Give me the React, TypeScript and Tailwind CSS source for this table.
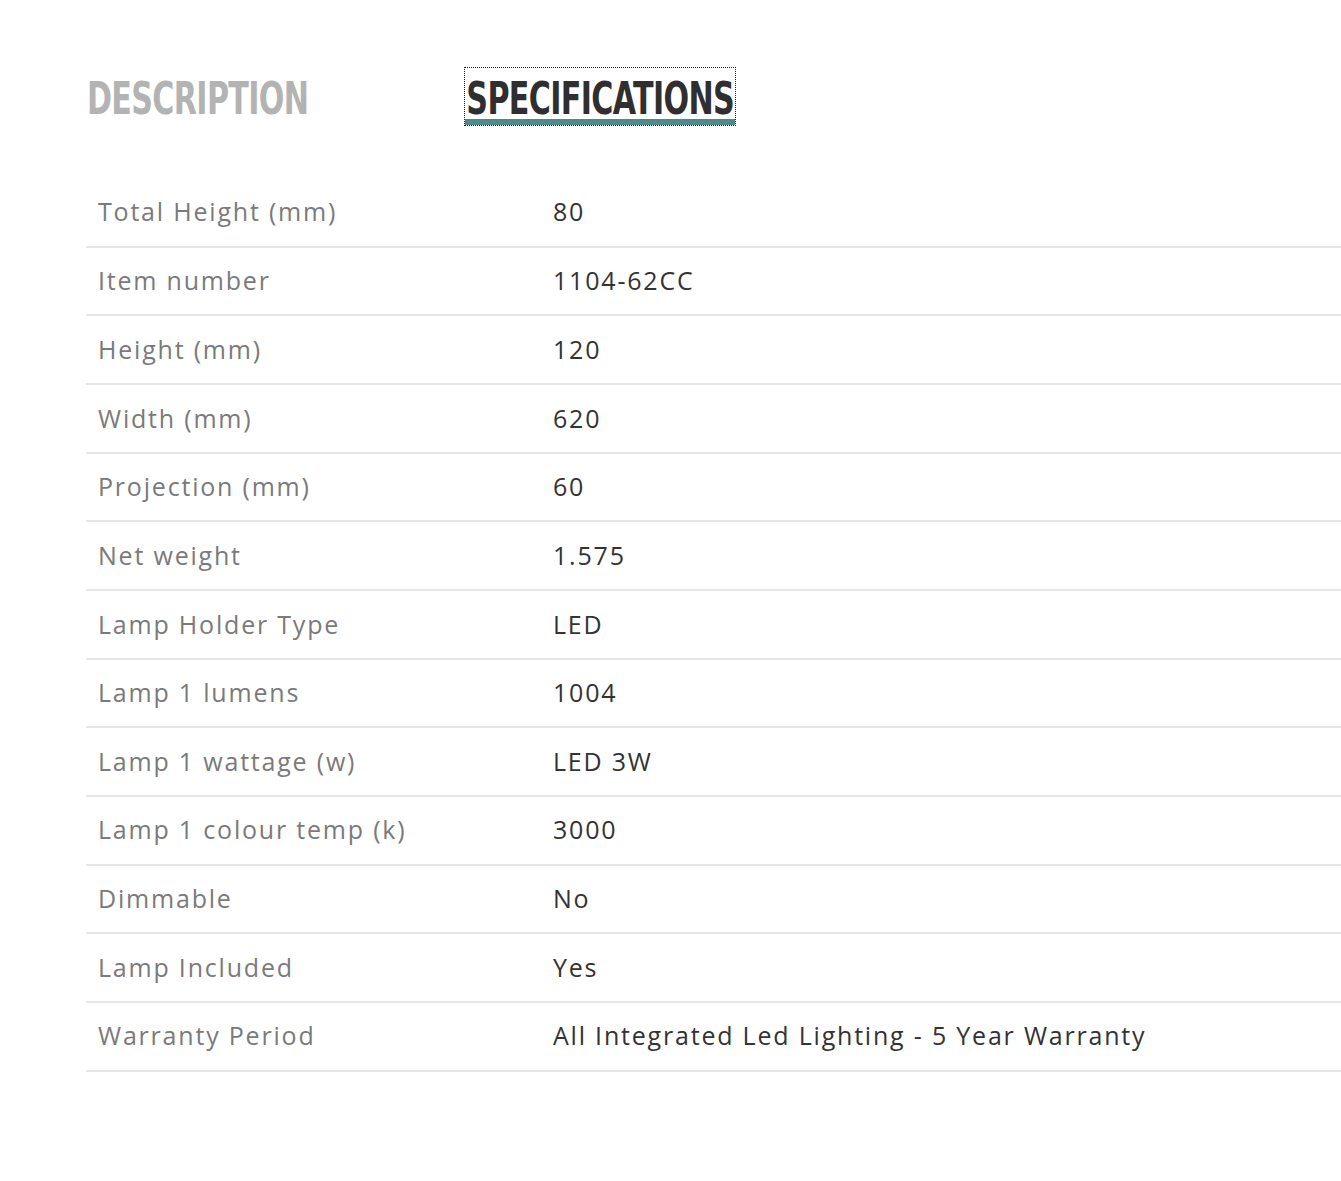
import { useState } from "react";

const specs: [string, string][] = [
  ["Total Height (mm)", "80"],
  ["Item number", "1104-62CC"],
  ["Height (mm)", "120"],
  ["Width (mm)", "620"],
  ["Projection (mm)", "60"],
  ["Net weight", "1.575"],
  ["Lamp Holder Type", "LED"],
  ["Lamp 1 lumens", "1004"],
  ["Lamp 1 wattage (w)", "LED 3W"],
  ["Lamp 1 colour temp (k)", "3000"],
  ["Dimmable", "No"],
  ["Lamp Included", "Yes"],
  ["Warranty Period", "All Integrated Led Lighting - 5 Year Warranty"],
];

// no condensed face installed, so the heading font is squeezed horizontally
const headingText =
  "block h-[51px] shrink-0 origin-left scale-x-[0.67] overflow-visible whitespace-nowrap pt-[11px] font-['DejaVu_Sans',sans-serif] text-[45px] leading-[40px] font-bold uppercase tracking-[-1px]";

export default function App() {
  const [tab, setTab] = useState<"description" | "specifications">("specifications");

  return (
    <div className="min-h-[1181px] bg-white pl-[86px] pt-[67px] font-['Open_Sans',sans-serif]">
      <div className="flex items-start">
        <button
          type="button"
          onClick={() => setTab("description")}
          className={`flex h-[59px] w-[378px] flex-col items-stretch justify-start border border-transparent text-left ${
            tab === "description" ? "text-[#2f2f2f]" : "text-[#b3b3b3]"
          }`}
        >
          <span className={headingText}>Description</span>
        </button>
        <button
          type="button"
          onClick={() => setTab("specifications")}
          className="flex h-[59px] w-[272px] flex-col items-stretch justify-start border border-dotted border-[#222] text-left text-[#2f2f2f]"
        >
          <span className={`${headingText} pl-[2px]`}>Specifications</span>
          <span
            className={`block h-[6px] shrink-0 ${
              tab === "specifications" ? "bg-[#4f8a8b]" : "bg-transparent"
            }`}
          />
        </button>
      </div>

      <table className="mt-[52px] w-[1255px] border-collapse">
        <tbody>
          {specs.map(([label, value]) => (
            <tr key={label} className="h-[68.67px] border-b-2 border-[#e6e6e6]">
              <td className="w-[467px] pl-3 text-[25px] tracking-[1.8px] text-[#7a7a7a]">{label}</td>
              <td className="text-[25px] tracking-[1.8px] text-[#333]">{value}</td>
            </tr>
          ))}
        </tbody>
      </table>
    </div>
  );
}
